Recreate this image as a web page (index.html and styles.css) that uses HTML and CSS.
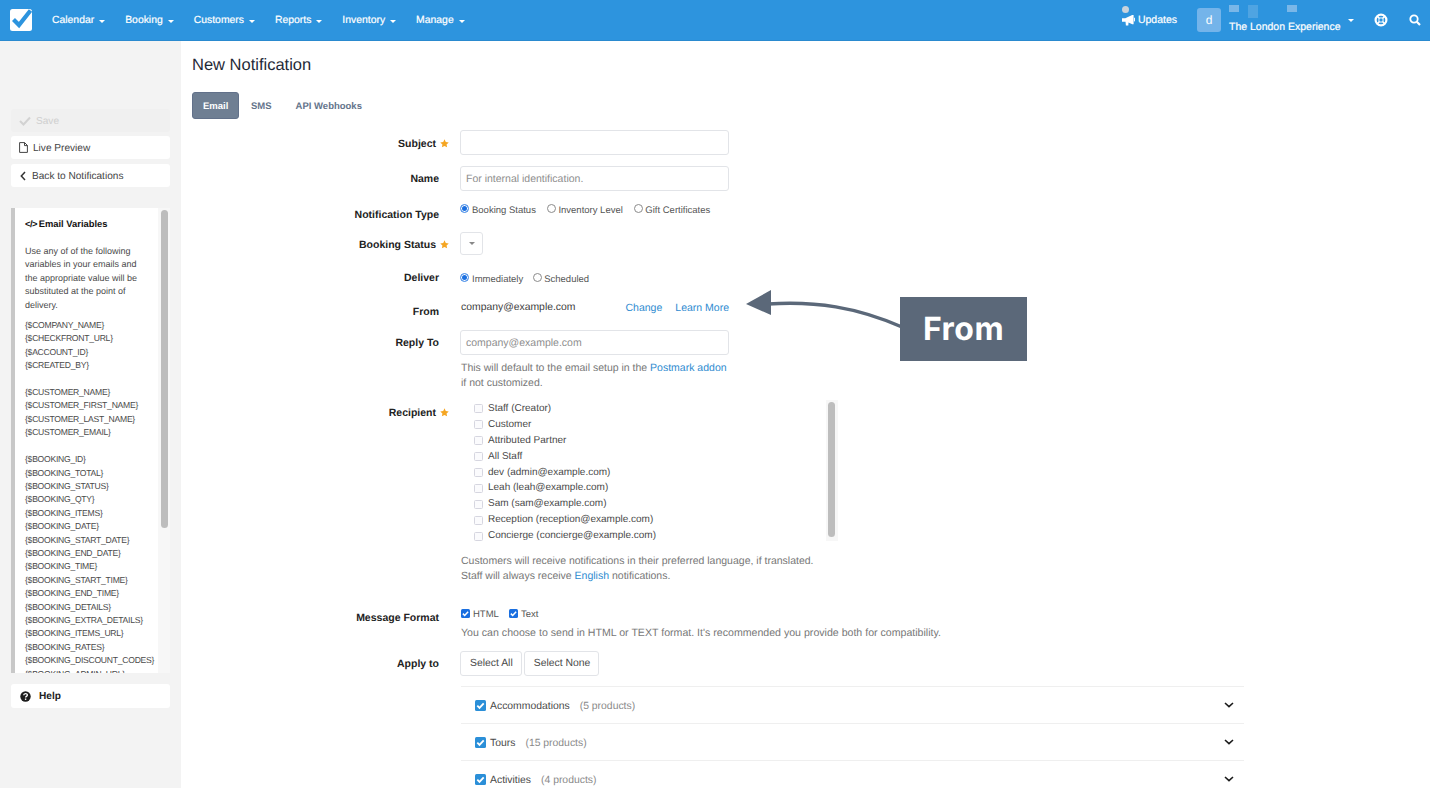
FILE: index.html
```html
<!DOCTYPE html>
<html lang="en">
<head>
<meta charset="utf-8">
<title>New Notification</title>
<link rel="stylesheet" href="styles.css">
</head>
<body>
<svg class="defs" width="0" height="0" aria-hidden="true">
  <symbol id="star" viewBox="0 0 10 10"><path d="M5 .4l1.4 3 3.3.4-2.4 2.2.6 3.3L5 7.7 2.1 9.3l.6-3.3L.3 3.8l3.3-.4z" fill="#f5a623"/></symbol>
  <symbol id="tick" viewBox="0 0 12 12"><path d="M2.500 6.200l2.400 2.400 4.600-5" fill="none" stroke="#fff" stroke-width="2"/></symbol>
  <symbol id="chev" viewBox="0 0 10 6"><path d="M1 1l4 3.600L9 1" fill="none" stroke="#1b1b1b" stroke-width="1.600"/></symbol>
</svg>
<header class="topbar">
  <svg class="logo" width="24" height="24" viewBox="0 0 24 24"><rect x="1" y="2" width="22" height="22" rx="2.500" fill="#fff"/><path d="M4.500 12.500l5.500 5.500L21.500 3.500" fill="none" stroke="#2d94de" stroke-width="4.200"/></svg>
  <nav class="nav">
    <a class="nav-item">Calendar<i class="caret"></i></a>
    <a class="nav-item">Booking<i class="caret"></i></a>
    <a class="nav-item">Customers<i class="caret"></i></a>
    <a class="nav-item">Reports<i class="caret"></i></a>
    <a class="nav-item">Inventory<i class="caret"></i></a>
    <a class="nav-item">Manage<i class="caret"></i></a>
  </nav>
  <div class="top-right">
    <a class="updates">
      <i class="dot"></i>
      <svg width="13" height="12" viewBox="0 0 14 12"><path d="M0 4h3.500L11 .5h1.500v10H11L7 8.700 6.800 12H4.200L3.800 8H0zM13 3.500a2 2 0 0 1 0 4z" fill="#fff"/></svg>
      <span>Updates</span>
    </a>
    <div class="avatar">d</div>
    <div class="account">
      <div class="redacted"><i class="r1"></i><i class="r2"></i><i class="r3"></i></div>
      <div class="account-name">The London Experience</div>
    </div>
    <i class="caret account-caret"></i>
    <svg class="ring" width="14" height="14" viewBox="0 0 14 14"><circle cx="7" cy="7" r="5.400" fill="none" stroke="#fff" stroke-width="2.200"/><circle cx="7" cy="7" r="2.200" fill="none" stroke="#fff" stroke-width="1"/><path d="M3 3l2.400 2.400M11 3L8.600 5.400M3 11l2.400-2.400M11 11L8.600 8.600" stroke="#fff" stroke-width="1.600"/></svg>
    <svg class="search" width="12" height="12" viewBox="0 0 12 12"><circle cx="5" cy="5" r="3.700" fill="none" stroke="#fff" stroke-width="1.800"/><path d="M7.800 7.800L11 11" stroke="#fff" stroke-width="2.200"/></svg>
  </div>
</header>
<div class="layout">
  <aside class="sidebar">
    <div class="side-btn disabled"><svg width="12" height="10" viewBox="0 0 12 10"><path d="M1 5l3.500 3.500L11 1.500" fill="none" stroke="#d2d2d2" stroke-width="2"/></svg>Save</div>
    <div class="side-btn"><svg class="i-file" width="9" height="11" viewBox="0 0 9 11"><path d="M.6.600h5l2.800 2.800v7H.6zM5.500.600v3h3" fill="none" stroke="#444" stroke-width="1"/></svg>Live Preview</div>
    <div class="side-btn"><svg class="i-back" width="6" height="10" viewBox="0 0 6 10"><path d="M5 1L1.300 5 5 9" fill="none" stroke="#333" stroke-width="1.500"/></svg>Back to Notifications</div>
    <section class="vars">
      <div class="vars-body">
        <h3 class="vars-title"><b class="code">&lt;/&gt;</b> Email Variables</h3>
        <p class="vars-intro">Use any of of the following variables in your emails and the appropriate value will be substituted at the point of delivery.</p>
        <p class="vars-list">{$COMPANY_NAME}<br>{$CHECKFRONT_URL}<br>{$ACCOUNT_ID}<br>{$CREATED_BY}<br><br>{$CUSTOMER_NAME}<br>{$CUSTOMER_FIRST_NAME}<br>{$CUSTOMER_LAST_NAME}<br>{$CUSTOMER_EMAIL}<br><br>{$BOOKING_ID}<br>{$BOOKING_TOTAL}<br>{$BOOKING_STATUS}<br>{$BOOKING_QTY}<br>{$BOOKING_ITEMS}<br>{$BOOKING_DATE}<br>{$BOOKING_START_DATE}<br>{$BOOKING_END_DATE}<br>{$BOOKING_TIME}<br>{$BOOKING_START_TIME}<br>{$BOOKING_END_TIME}<br>{$BOOKING_DETAILS}<br>{$BOOKING_EXTRA_DETAILS}<br>{$BOOKING_ITEMS_URL}<br>{$BOOKING_RATES}<br>{$BOOKING_DISCOUNT_CODES}<br>{$BOOKING_ADMIN_URL}</p>
      </div>
      <div class="track vars-track"><i class="thumb vars-thumb"></i></div>
    </section>
    <div class="side-btn help-btn"><svg width="11" height="11" viewBox="0 0 11 11"><circle cx="5.500" cy="5.500" r="5.200" fill="#1c1c1c"/><path d="M3.700 4.300c0-2.300 3.700-2.300 3.700-.2 0 1.300-1.800 1.300-1.800 2.500" fill="none" stroke="#fff" stroke-width="1.300"/><rect x="4.900" y="7.500" width="1.400" height="1.400" fill="#fff"/></svg>Help</div>
  </aside>
  <main class="main">
    <h1 class="title">New Notification</h1>
    <div class="tabs">
      <a class="tab active">Email</a>
      <a class="tab">SMS</a>
      <a class="tab">API Webhooks</a>
    </div>
    <form class="form">
      <div class="row r-subject">
        <label class="lbl pad6">Subject<svg class="star"><use href="#star"/></svg></label>
        <div class="field"><div class="input"></div></div>
      </div>
      <div class="row r-name">
        <label class="lbl pad5 plain">Name</label>
        <div class="field"><div class="input ph">For internal identification.</div></div>
      </div>
      <div class="row r-type">
        <label class="lbl pad6 plain">Notification Type</label>
        <div class="field opts">
          <span class="opt"><i class="radio on"></i>Booking Status</span>
          <span class="opt"><i class="radio"></i>Inventory Level</span>
          <span class="opt"><i class="radio"></i>Gift Certificates</span>
        </div>
      </div>
      <div class="row r-status">
        <label class="lbl pad5">Booking Status<svg class="star"><use href="#star"/></svg></label>
        <div class="field"><div class="select"><i class="select-caret"></i></div></div>
      </div>
      <div class="row r-deliver">
        <label class="lbl plain">Deliver</label>
        <div class="field opts opts-tight">
          <span class="opt"><i class="radio on"></i>Immediately</span>
          <span class="opt"><i class="radio"></i>Scheduled</span>
        </div>
      </div>
      <div class="row r-from">
        <label class="lbl pad5 plain">From</label>
        <div class="field from"><span class="from-addr">company@example.com</span><a class="link change">Change</a><a class="link">Learn More</a></div>
      </div>
      <div class="row r-reply">
        <label class="lbl pad5 plain">Reply To</label>
        <div class="field">
          <div class="input ph">company@example.com</div>
          <p class="hint hint-reply">This will default to the email setup in the <a class="link">Postmark addon</a><br>if not customized.</p>
        </div>
      </div>
      <div class="row r-recipient">
        <label class="lbl pad5">Recipient<svg class="star"><use href="#star"/></svg></label>
        <div class="field wide">
          <div class="recipients">
            <ul class="rec-list">
              <li><i class="cb"></i>Staff (Creator)</li>
              <li><i class="cb"></i>Customer</li>
              <li><i class="cb"></i>Attributed Partner</li>
              <li><i class="cb"></i>All Staff</li>
              <li><i class="cb"></i>dev (admin@example.com)</li>
              <li><i class="cb"></i>Leah (leah@example.com)</li>
              <li><i class="cb"></i>Sam (sam@example.com)</li>
              <li><i class="cb"></i>Reception (reception@example.com)</li>
              <li><i class="cb"></i>Concierge (concierge@example.com)</li>
            </ul>
            <div class="track rec-track"><i class="thumb rec-thumb"></i></div>
          </div>
          <p class="hint hint-rec">Customers will receive notifications in their preferred language, if translated.<br>Staff will always receive <a class="link">English</a> notifications.</p>
        </div>
      </div>
      <div class="row r-format">
        <label class="lbl pad4 plain">Message Format</label>
        <div class="field wide">
          <div class="opts opts-tight">
            <span class="opt fmt"><i class="cb-mini"><svg><use href="#tick"/></svg></i>HTML</span>
            <span class="opt fmt"><i class="cb-mini"><svg><use href="#tick"/></svg></i>Text</span>
          </div>
          <p class="hint hint-fmt">You can choose to send in HTML or TEXT format. It's recommended you provide both for compatibility.</p>
        </div>
      </div>
      <div class="row r-apply">
        <label class="lbl pad5 plain">Apply to</label>
        <div class="field wide">
          <div class="btns"><a class="btn">Select All</a><a class="btn">Select None</a></div>
          <div class="cats">
            <div class="cat"><i class="cb-big"><svg><use href="#tick"/></svg></i><span class="cat-name">Accommodations</span><span class="cat-count">(5 products)</span><svg class="chev"><use href="#chev"/></svg></div>
            <div class="cat"><i class="cb-big"><svg><use href="#tick"/></svg></i><span class="cat-name">Tours</span><span class="cat-count">(15 products)</span><svg class="chev"><use href="#chev"/></svg></div>
            <div class="cat"><i class="cb-big"><svg><use href="#tick"/></svg></i><span class="cat-name">Activities</span><span class="cat-count">(4 products)</span><svg class="chev"><use href="#chev"/></svg></div>
          </div>
        </div>
      </div>
    </form>
    <div class="callout">
      <svg class="callout-arrow" width="160" height="50" viewBox="0 0 160 50"><path d="M22 14C70 11 110 17 156 37" fill="none" stroke="#5b6879" stroke-width="3.500"/><path d="M0 14L25 0v25z" fill="#5b6879"/></svg>
      <div class="callout-box">From</div>
    </div>
  </main>
</div>
</body>
</html>
```
FILE: styles.css
```css
* { box-sizing: border-box; }
html, body { margin: 0; height: 100%; overflow: hidden; }
body { font: 10.500px/14px "Liberation Sans", Arial, sans-serif; color: #3c3c3c; background: #fff; text-rendering: geometricPrecision; }
.defs { position: absolute; }
p, h1, h3, ul { margin: 0; padding: 0; }
i { display: block; font-style: normal; }
a { color: inherit; text-decoration: none; }

.topbar { height: 41px; background: #2d94de; color: #fff; display: flex; align-items: center; border-bottom: 1px solid #2a8acf; }
.logo { margin: -2px 0 0 9px; flex: none; }
.nav { display: flex; margin: 2px 0 0 19px; gap: 20px; font-size: 10.400px; }
.nav-item { display: flex; align-items: center; -webkit-text-stroke: .2px #fff; }
.caret { width: 0; height: 0; border: 3px solid transparent; border-top-color: #fff; border-bottom: 0; margin-left: 5px; }
.top-right { margin-left: auto; display: flex; align-items: center; height: 40px; position: relative; padding-right: 9px; }
.updates { display: flex; align-items: center; gap: 3px; position: relative; margin-right: 20px; margin-top: -1px; -webkit-text-stroke: .2px #fff; }
.dot { position: absolute; left: 0; top: -7px; width: 7px; height: 7px; border-radius: 50%; background: #c9d3dc; }
.avatar { width: 24px; height: 24px; border-radius: 3px; background: #74b4ea; font-size: 12px; line-height: 24px; text-align: center; margin: 0 8px 0 0; }
.account { width: 111px; height: 32px; display: flex; flex-direction: column; margin-top: 2px; }
.redacted { height: 14px; display: flex; align-items: flex-start; }
.redacted i { background: #7ab7e8; height: 7px; }
.r1 { width: 10px; }
.r2 { width: 10px; height: 13px !important; margin-left: 9px; background: #4fa4e2 !important; }
.r3 { width: 10px; margin-left: 29px; }
.account-name { white-space: nowrap; margin-top: 1px; -webkit-text-stroke: .2px #fff; }
.account-caret { margin: 0 20px 0 8px; }
.ring { margin-right: 21px; }
.search { flex: none; }

.layout { display: flex; height: 747px; }
.sidebar { width: 181px; flex: none; background: #f3f3f3; padding: 68px 11px 0; }
.side-btn { width: 159px; height: 23px; background: #fff; border-radius: 3px; margin-bottom: 5px; padding: 2px 0 0 8px; display: flex; align-items: center; gap: 6px; color: #444; font-size: 10.100px; }
.side-btn svg { margin-top: -2px; }
.side-btn.disabled { background: #f0f0f0; color: #cfcfcf; height: 23px; margin-bottom: 4px; gap: 5px; }
.side-btn .i-file { margin-right: -1px; }
.side-btn .i-back { margin-left: 1px; }
.vars { width: 159px; height: 465px; margin-top: 21px; background: #fff; border-left: 4px solid #c8c8c8; display: flex; overflow: hidden; }
.vars-body { width: 143px; flex: none; padding: 10px 0 0 10px; font-size: 9px; line-height: 13.400px; color: #4a4a4a; }
.vars-title { font-size: 9.400px; line-height: 11px; color: #111; font-weight: 700; margin-bottom: 16px; }
.code { letter-spacing: -.5px; margin-right: -1px; }
.vars-intro { width: 122px; margin-bottom: 7px; }
.vars-list { white-space: nowrap; font-size: 8.600px; letter-spacing: -.26px; }
.track { background: #f7f7f7; position: relative; }
.thumb { position: absolute; background: #bdbdbd; border-radius: 4px; }
.vars-track { width: 12px; flex: none; }
.vars-thumb { left: 3px; top: 2px; width: 7px; height: 318px; }
.help-btn { margin-top: 11px; height: 24px; padding-left: 9px; gap: 8px; font-weight: 700; color: #222; }

.main { flex: 1; position: relative; padding: 0 0 0 11px; min-width: 0; }
.title { font-size: 16.500px; line-height: 20px; font-weight: 400; color: #1f2937; margin-top: 14px; }
.tabs { display: flex; margin-top: 17px; }
.tab { height: 27px; line-height: 29px; font-size: 9.500px; font-weight: 700; color: #64748b; padding: 0 12px; border-radius: 3px; }
.tab.active { background: #6f7f93; color: #fff; border: 1px solid #62718a; line-height: 27px; width: 47px; padding: 0 10px; }
.form { margin-top: 11px; }
.row { display: grid; grid-template-columns: 247px 1fr; column-gap: 22px; align-items: start; }
.lbl { font-weight: 700; color: #222; text-align: right; display: block; white-space: nowrap; margin-right: -10px; padding-top: 1px; }
.lbl.plain { margin-right: 0; }
.star { width: 9px; height: 9px; margin-left: 4px; vertical-align: -1px; }
.pad4 { padding-top: 4px; } .pad5 { padding-top: 6px; } .pad6 { padding-top: 7px; }
.field { width: 268px; }
.field.wide { width: 783px; }
.input { height: 25px; width: 269px; margin-left: -1px; border: 1px solid #e2e4e8; border-radius: 3px; background: #fff; padding: 0 5px; line-height: 24px; }
.ph { color: #8e8e8e; }
.r-subject { height: 36px; }
.r-name { height: 35px; }
.r-type { height: 31px; }
.r-status { height: 38px; }
.r-deliver { height: 29px; }
.r-from { height: 31px; }
.r-reply { height: 70px; }
.r-recipient { height: 207px; }
.r-format { height: 44px; }
.opts { display: flex; gap: 12.500px; }
.opts-tight { gap: 11px; }
.opt { display: flex; font-size: 9.500px; color: #555; line-height: 15px; white-space: nowrap; padding-top: 2px; }
.radio { width: 9px; height: 9px; border-radius: 50%; border: 1px solid #8b8b8b; margin: 1px 2px 0 -1px; background: #fff; }
.radio.on { background: #fff; border: 1px solid #3a85e6; box-shadow: inset 0 0 0 1px #fff, inset 0 0 0 5px #1a6fe0; margin-right: 3px; }
.select { width: 23px; height: 23px; margin-left: -1px; border: 1px solid #e2e4e8; border-radius: 3px; display: flex; align-items: center; justify-content: center; }
.select-caret { width: 0; height: 0; border: 3px solid transparent; border-top-color: #888; border-bottom: 0; }
.from { display: flex; padding-top: 2px; }
.from-addr { flex: 1; color: #3c3c3c; font-size: 10.400px; }
.link { color: #2e8bd0; }
.change { margin-right: 13px; }
.hint { color: #777; line-height: 14.500px; }
.hint-reply { margin-top: 6px; white-space: nowrap; }
.recipients { width: 377px; height: 141px; display: flex; justify-content: space-between; }
.rec-list { list-style: none; padding: 1px 0 0 13px; }
.rec-list li { display: flex; align-items: center; height: 15.900px; font-size: 10px; color: #4a4a4a; white-space: nowrap; }
.cb { width: 9px; height: 9px; border: 1px solid #d6d6e0; border-radius: 1.500px; background: #fbfbfd; margin-right: 5px; }
.rec-track { width: 12px; height: 141px; flex: none; }
.rec-thumb { left: 2px; top: 2px; width: 7px; height: 135px; }
.hint-rec { margin-top: 13px; white-space: nowrap; }
.fmt { gap: 3px; line-height: 14px; padding-top: 1px; }
.opts .fmt + .fmt { margin-left: -1px; }
.cb-mini { width: 9px; height: 9px; border-radius: 1.500px; background: #1a6fe0; margin-top: 1px; }
.cb-mini svg { width: 9px; height: 9px; display: block; }
.hint-fmt { margin-top: 4px; font-size: 10.600px; }
.btns { display: flex; gap: 2px; margin-left: -1px; font-size: 10.400px; }
.btn { height: 25px; line-height: 24px; padding: 0 8px 0 9px; border: 1px solid #e2e4e8; border-radius: 3px; color: #4a4a4a; }
.cats { margin-top: 10px; font-size: 10.400px; }
.cat { height: 37px; border-top: 1px solid #efefef; display: flex; align-items: center; padding: 0 10px 0 14px; }
.cb-big { width: 11px; height: 11px; border-radius: 1.500px; background: #2b8fd8; margin-right: 4px; }
.cb-big svg { width: 11px; height: 11px; display: block; }
.cat-name { color: #4a4a4a; margin-top: 3px; }
.cat-count { color: #8a8a8a; margin: 3px 0 0 10px; }
.chev { width: 10px; height: 6px; margin-left: auto; }

.callout { position: absolute; left: 565px; top: 248px; width: 282px; height: 73px; }
.callout-arrow { position: absolute; left: 0; top: 1px; }
.callout-box { position: absolute; left: 154px; top: 8px; width: 127px; height: 64px; background: #5b6879; color: #fff; font: 700 32px/64px Inter, "Liberation Sans", sans-serif; letter-spacing: .5px; text-align: center; }
```
